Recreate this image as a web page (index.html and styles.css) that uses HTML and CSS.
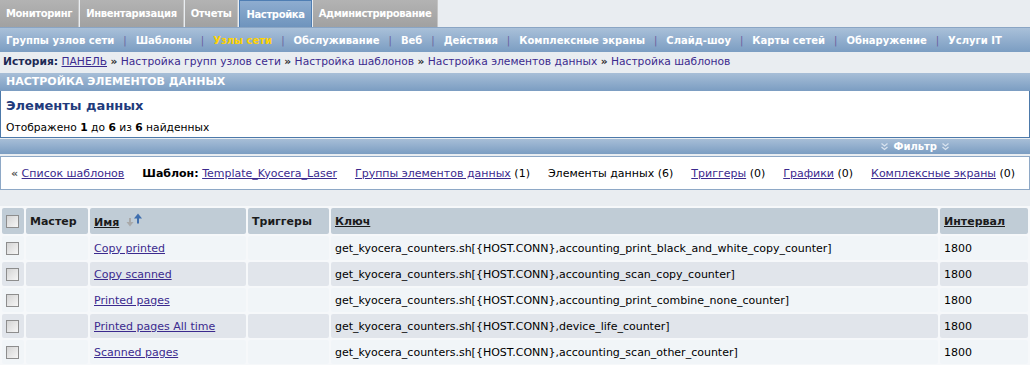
FILE: index.html
```html
<!DOCTYPE html>
<html lang="ru">
<head>
    <meta charset="UTF-8">
    <title>Настройка элементов данных</title>
    <link rel="stylesheet" href="styles.css">
</head>
<body>
    <div class="tabs">
        <a class="tab">Мониторинг</a>
        <a class="tab">Инвентаризация</a>
        <a class="tab">Отчеты</a>
        <a class="tab active">Настройка</a>
        <a class="tab">Администрирование</a>
    </div>
    <div class="submenu">
        <a>Группы узлов сети</a><span class="sep">|</span>
        <a>Шаблоны</a><span class="sep">|</span>
        <a class="current">Узлы сети</a><span class="sep">|</span>
        <a>Обслуживание</a><span class="sep">|</span>
        <a>Веб</a><span class="sep">|</span>
        <a>Действия</a><span class="sep">|</span>
        <a>Комплексные экраны</a><span class="sep">|</span>
        <a>Слайд-шоу</a><span class="sep">|</span>
        <a>Карты сетей</a><span class="sep">|</span>
        <a>Обнаружение</a><span class="sep">|</span>
        <a>Услуги IT</a>
    </div>
    <div class="history">
        <b>История:</b> <a class="link">ПАНЕЛЬ</a>
        <span class="raquo">»</span> <a class="plain">Настройка групп узлов сети</a>
        <span class="raquo">»</span> <a class="plain">Настройка шаблонов</a>
        <span class="raquo">»</span> <a class="plain">Настройка элементов данных</a>
        <span class="raquo">»</span> <a class="plain">Настройка шаблонов</a>
    </div>

    <div class="bar page-title">НАСТРОЙКА ЭЛЕМЕНТОВ ДАННЫХ</div>
    <div class="summary">
        <h1>Элементы данных</h1>
        <div class="found">Отображено <b>1</b> до <b>6</b> из <b>6</b> найденных</div>
    </div>
    <div class="bar filter-bar">
        <span class="filter">
            <svg width="9" height="9" viewBox="0 0 9 9"><path d="M1.5 1.5 4.5 4 7.5 1.5M1.5 5 4.5 7.5 7.5 5" fill="none" stroke="#d8e3ef" stroke-width="1.3"/></svg>
            Фильтр
            <svg width="9" height="9" viewBox="0 0 9 9"><path d="M1.5 1.5 4.5 4 7.5 1.5M1.5 5 4.5 7.5 7.5 5" fill="none" stroke="#d8e3ef" stroke-width="1.3"/></svg>
        </span>
    </div>
    <div class="host-nav">
        <span class="item"><span class="laquo">«</span> <a class="link">Список шаблонов</a></span>
        <span class="item"><b>Шаблон:</b> <a class="link">Template_Kyocera_Laser</a></span>
        <span class="item"><a class="link">Группы элементов данных</a> (1)</span>
        <span class="item">Элементы данных (6)</span>
        <span class="item"><a class="link">Триггеры</a> (0)</span>
        <span class="item"><a class="link">Графики</a> (0)</span>
        <span class="item"><a class="link">Комплексные экраны</a> (0)</span>
    </div>

    <table class="items">
        <thead>
            <tr>
                <th class="col-check"><span class="checkbox"></span></th>
                <th class="col-master">Мастер</th>
                <th class="col-name"><a class="sort">Имя</a>
                    <svg class="sort-icon" width="18" height="14" viewBox="0 0 18 14"><path d="M4 5v5" stroke="#a9a9a9" stroke-width="2"/><path d="M0.5 9h7L4 13.5z" fill="#a9a9a9"/><path d="M12 4.5v6" stroke="#3f6eae" stroke-width="2"/><path d="M8 5.5 12 0.5 16 5.5z" fill="#3f6eae"/></svg>
                </th>
                <th class="col-triggers">Триггеры</th>
                <th class="col-key"><a class="sort">Ключ</a></th>
                <th class="col-interval"><a class="sort">Интервал</a></th>
            </tr>
        </thead>
        <tbody>
            <tr>
                <td><span class="checkbox"></span></td>
                <td></td>
                <td><a class="link">Copy printed</a></td>
                <td></td>
                <td>get_kyocera_counters.sh[{HOST.CONN},accounting_print_black_and_white_copy_counter]</td>
                <td>1800</td>
            </tr>
            <tr>
                <td><span class="checkbox"></span></td>
                <td></td>
                <td><a class="link">Copy scanned</a></td>
                <td></td>
                <td>get_kyocera_counters.sh[{HOST.CONN},accounting_scan_copy_counter]</td>
                <td>1800</td>
            </tr>
            <tr>
                <td><span class="checkbox"></span></td>
                <td></td>
                <td><a class="link">Printed pages</a></td>
                <td></td>
                <td>get_kyocera_counters.sh[{HOST.CONN},accounting_print_combine_none_counter]</td>
                <td>1800</td>
            </tr>
            <tr>
                <td><span class="checkbox"></span></td>
                <td></td>
                <td><a class="link">Printed pages All time</a></td>
                <td></td>
                <td>get_kyocera_counters.sh[{HOST.CONN},device_life_counter]</td>
                <td>1800</td>
            </tr>
            <tr>
                <td><span class="checkbox"></span></td>
                <td></td>
                <td><a class="link">Scanned pages</a></td>
                <td></td>
                <td>get_kyocera_counters.sh[{HOST.CONN},accounting_scan_other_counter]</td>
                <td>1800</td>
            </tr>
        </tbody>
    </table>
</body>
</html>
```

FILE: styles.css
```css
body {
    margin: 0;
    font-family: "DejaVu Sans", Verdana, sans-serif;
    font-size: 11px;
    color: #000;
    background-color: #e9edf1;
}
a {
    cursor: pointer;
}
.link {
    color: #3b2a8e;
    text-decoration: underline;
}
.plain {
    color: #3b2a8e;
}

/* top tabs */
.tabs {
    display: flex;
    height: 27px;
    border-bottom: 1px solid #8aa5c4;
}
.tab {
    display: flex;
    align-items: center;
    padding: 0 6px;
    margin-right: 1px;
    font-size: 10px;
    font-weight: bold;
    letter-spacing: -0.35px;
    color: #fff;
    background: linear-gradient(#b3b3b3, #a1a1a1);
    border-right: 1px solid #c4c4c4;
}
.tab.active {
    background: linear-gradient(#8eadd0, #6f94bd);
    border: 1px solid #4f7eb3;
    border-bottom: none;
}

/* submenu */
.submenu {
    display: flex;
    align-items: center;
    height: 24px;
    padding-left: 6px;
    background: linear-gradient(#a9c0d9, #7b9dc2);
    font-size: 10px;
    font-weight: bold;
    color: #fff;
}
.submenu .sep {
    color: #6a5f9e;
    font-weight: normal;
    margin: 0 9px 0 9px;
}
.submenu .current {
    color: #ffd200;
}
.history {
    height: 19px;
    line-height: 19px;
    padding-left: 3px;
    font-size: 10.7px;
    white-space: nowrap;
}
.history b {
    color: #1d2a55;
}
.history .raquo {
    font-weight: bold;
    color: #2a2a2a;
}

/* bars */
.bar {
    height: 18px;
    line-height: 18px;
    margin-top: 2px;
    background: linear-gradient(#a7bed7, #7b9dc2);
    color: #fff;
    font-weight: bold;
}
.page-title {
    padding-left: 6px;
}
.summary {
    background: #fff;
    border: 1px solid #4c79aa;
    border-top: none;
    padding: 7px 5px 3px;
    height: 36px;
}
.summary h1 {
    margin: 0 0 8px;
    font-size: 13px;
    color: #1f3b7c;
}
.found {
    font-size: 10.7px;
}
.filter-bar {
    height: 15px;
    line-height: 15px;
    font-size: 10px;
    display: flex;
    justify-content: flex-end;
    padding-right: 80px;
    margin-top: 1px;
}
.filter {
    display: flex;
    align-items: center;
    gap: 4px;
}

/* template navigation */
.host-nav {
    display: flex;
    align-items: center;
    gap: 18px;
    height: 32px;
    margin-top: 2px;
    padding-left: 10px;
    background: #fff;
    border: 1px solid #8ea8c6;
    white-space: nowrap;
}
.host-nav .laquo {
    color: #555;
    font-weight: bold;
}

/* items table */
.items {
    width: 100%;
    margin-top: 16px;
    border-spacing: 2px;
    background: #f6f8fa;
}
.items th, .items td {
    text-align: left;
    padding: 0 4px;
    border-radius: 2px;
    white-space: nowrap;
}
.items th {
    height: 26px;
    background: #c0ccd6;
    font-weight: bold;
    color: #1b1b1b;
}
.items td {
    height: 24px;
    font-size: 11px;
}
.items tbody tr:nth-child(odd) td {
    background: #f1f5f8;
}
.items tbody tr:nth-child(even) td {
    background: #e1e5eb;
}
.items .sort {
    color: #1b1b1b;
    text-decoration: underline;
}
.col-check { width: 14px; }
.col-master { width: 54px; }
.col-name { width: 148px; }
.col-triggers { width: 73px; }
.col-interval { width: 80px; }
.sort-icon {
    vertical-align: -1px;
    margin-left: 3px;
}
.checkbox {
    display: block;
    width: 11px;
    height: 11px;
    border: 1px solid #8d8d8d;
    background: linear-gradient(135deg, #d4d4d4, #f6f6f6);
}
```
